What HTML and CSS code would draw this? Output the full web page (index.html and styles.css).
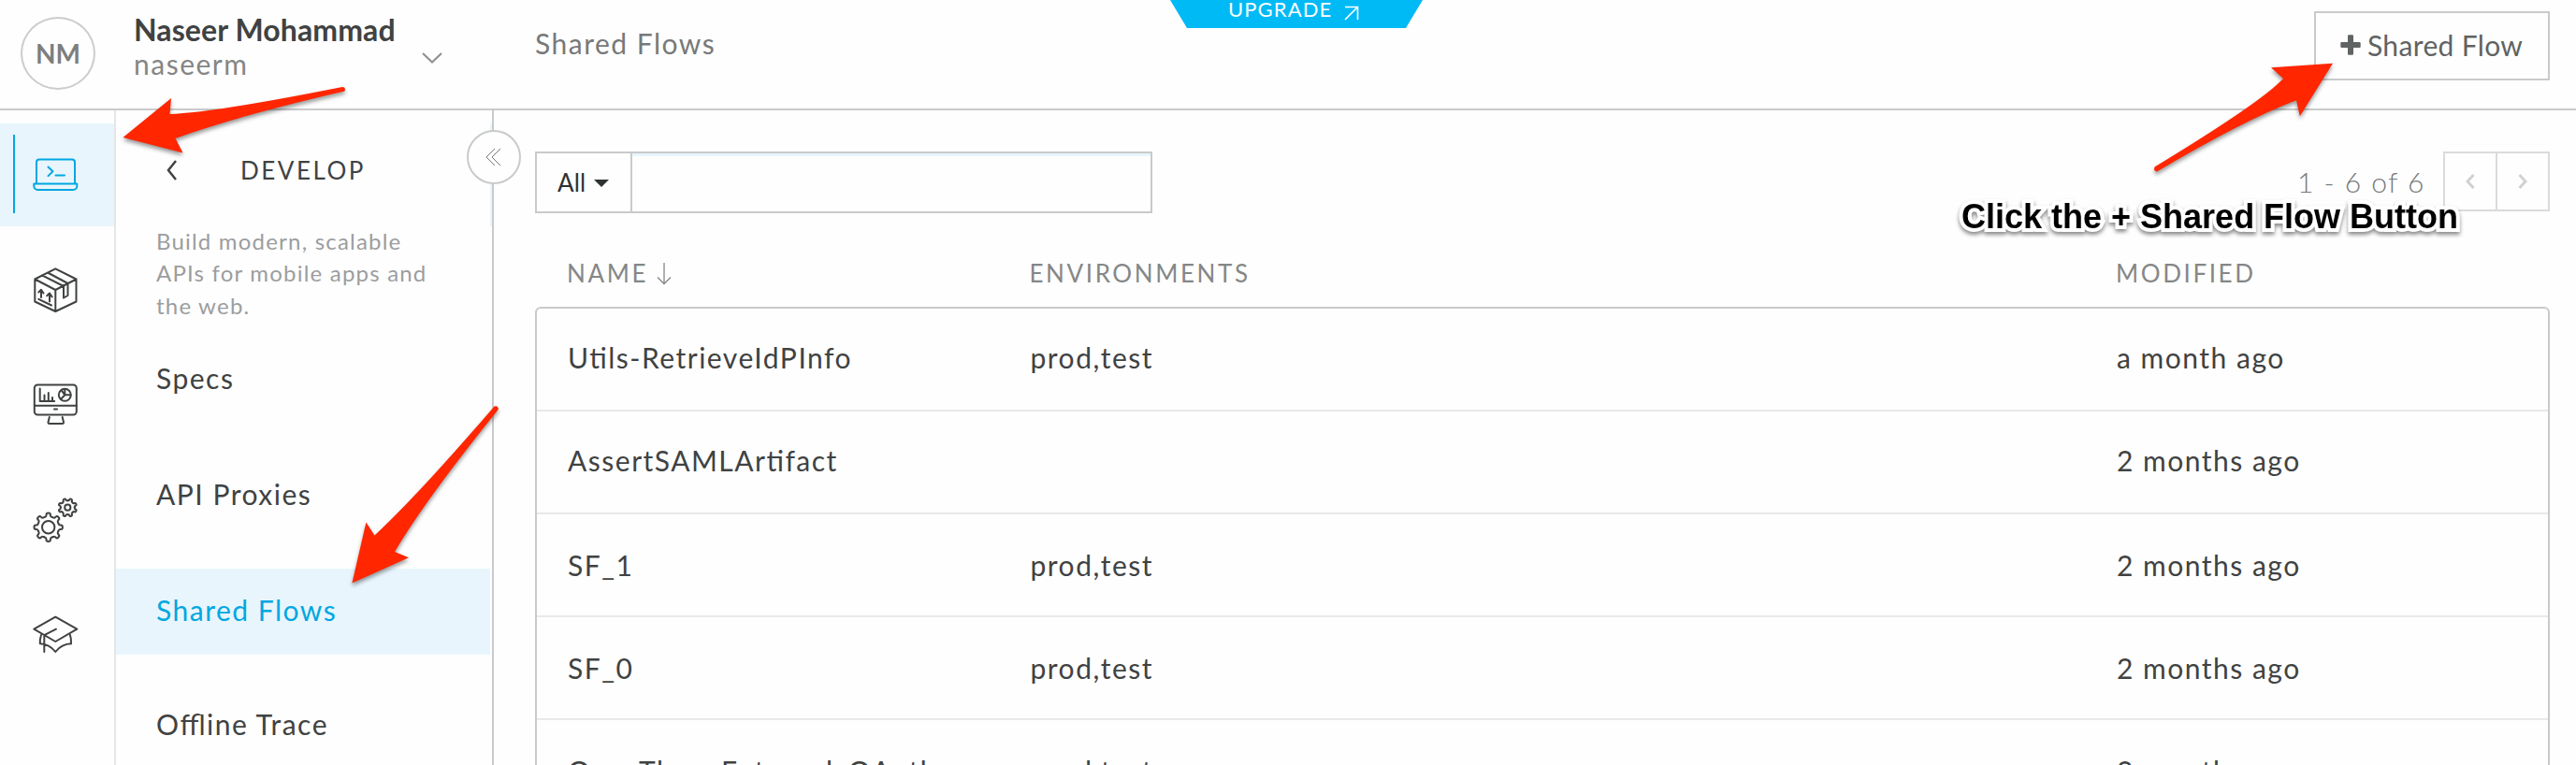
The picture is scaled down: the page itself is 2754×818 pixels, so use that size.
FILE: index.html
```
<!DOCTYPE html>
<html lang="en">
<head>
<meta charset="utf-8">
<title>Shared Flows</title>
<link rel="stylesheet" href="styles.css">
</head>
<body>
<div class="app">
  <header class="topbar">
    <div class="account">
      <div class="avatar">NM</div>
      <div class="who">
        <div class="who-name">Naseer Mohammad</div>
        <div class="who-id">naseerm</div>
      </div>
      <svg class="account-caret" width="24" height="14" viewBox="0 0 24 14"><path d="M2 2l10 9.500L22 2"/></svg>
    </div>
    <h1 class="title">Shared Flows</h1>
    <button class="new-flow">
      <svg width="22" height="22" viewBox="0 0 22 22"><path d="M8 1.500q0-1.200 1.200-1.200h3.600q1.200 0 1.200 1.200v6.500h6.500q1.200 0 1.200 1.200v3.600q0 1.200-1.200 1.200h-6.500v6.500q0 1.200-1.200 1.200H9.200q-1.200 0-1.200-1.200v-6.500h-6.500q-1.200 0-1.200-1.200V9.200q0-1.200 1.200-1.200h6.500z"/></svg>
      <span>Shared Flow</span>
    </button>
  </header>

  <div class="body">
    <nav class="rail">
      <a class="rail-item active">
        <svg class="icon" viewBox="0 0 50 50"><path d="M5 34V11.500a3 3 0 0 1 3-3h35a3 3 0 0 1 3 3V34M2.300 34.500h46v2.500a4 4 0 0 1-4 4h-38a4 4 0 0 1-4-4zM17.500 16.500l5 4.800-5 4.800M25.500 25.500h9.500"/></svg>
      </a>
      <a class="rail-item">
        <svg class="icon" viewBox="0 0 50 50"><path d="M25.300 2.300L47.500 13.500V37.500L25.300 48 3.300 37.500V13.500zM3.300 13.500L25.300 25 47.500 13.500M25.300 25V48M17 6.500L38.500 18V31L34 33.500V21L11 9.300M10 25v8M7.300 27.500L10 24.700l2.500 3.800M19 29v8.500M16.200 31.200L19 28.500l2.700 4M7.300 34.800L21 41.500"/></svg>
      </a>
      <a class="rail-item">
        <svg class="icon" viewBox="0 0 50 50"><rect x="2.800" y="3.500" width="45" height="32" rx="3.500"/><path d="M2.800 25.700h45M24 29.500h3M18.800 38l-1.300 5.500q0 1.500 1.500 1.500h13.500q1.500 0 1.500-1.500L32.700 38M8.700 7.500V21h15.500M13.500 21v-6.500M17.800 21v-9M22 21v-4"/><circle cx="35.300" cy="14.300" r="6.500"/><path d="M41.500 14.300h-6l-4.500 4.500M35.300 14.300l-3.600-5M35.300 14.300V8"/></svg>
      </a>
      <a class="rail-item">
        <svg class="icon" viewBox="0 0 50 50">
          <defs>
            <path id="tooth" vector-effect="non-scaling-stroke" d="M-4.400-10.600C-3-11-2.200-11.300-2.200-12.500V-13.500Q-2.200-15.200 0-15.200T2.200-13.500V-12.500C2.200-11.300 3-11 4.400-10.600"/>
            <g id="gear">
              <use href="#tooth"/><use href="#tooth" transform="rotate(45)"/><use href="#tooth" transform="rotate(90)"/><use href="#tooth" transform="rotate(135)"/>
              <use href="#tooth" transform="rotate(180)"/><use href="#tooth" transform="rotate(225)"/><use href="#tooth" transform="rotate(270)"/><use href="#tooth" transform="rotate(315)"/>
            </g>
          </defs>
          <use href="#gear" transform="translate(17.700 32.700)"/><circle cx="17.700" cy="32.700" r="6.700"/>
          <use href="#gear" transform="translate(38.300 11.700) rotate(22.500) scale(.65)"/><circle cx="38.300" cy="11.700" r="3.100"/>
        </svg>
      </a>
      <a class="rail-item">
        <svg class="icon" viewBox="0 0 50 50"><path d="M25.300 5.700L48.300 18.700 25.300 32 2.300 18.700zM26 18.700L13.300 25.200V43M10 25q-1.500 4.500-1.200 9.300Q18.500 34.500 25.300 43 32 34.500 42 34.300 42.500 29.500 40.800 24.500"/></svg>
      </a>
    </nav>

    <aside class="panel">
      <div class="panel-head">
        <svg width="14" height="24" viewBox="0 0 14 24"><path d="M11 2L3 12l8 10"/></svg>
        <span>DEVELOP</span>
      </div>
      <p class="panel-text">Build modern, scalable<br>APIs for mobile apps and<br>the web.</p>
      <ul class="menu">
        <li>Specs</li>
        <li>API Proxies</li>
        <li class="selected">Shared Flows</li>
        <li>Offline Trace</li>
      </ul>
      <button class="collapse">
        <svg width="18" height="20" viewBox="0 0 18 20"><path d="M11 1L2 10l9 9M17 1l-9 9 9 9"/></svg>
      </button>
    </aside>

    <main class="content">
      <div class="toolbar">
        <div class="filter">
          <div class="filter-scope">All<i class="caret"></i></div>
          <div class="filter-input"></div>
        </div>
        <div class="pager">
          <span class="pager-count">1 - 6 of 6</span>
          <div class="pager-buttons">
            <span><svg width="10" height="16" viewBox="0 0 10 16"><path d="M8.500 1L2 8l6.500 7"/></svg></span>
            <span><svg width="10" height="16" viewBox="0 0 10 16"><path d="M1.500 1L8 8l-6.500 7"/></svg></span>
          </div>
        </div>
      </div>
      <div class="cols head">
        <span>NAME<svg width="16" height="25" viewBox="0 0 16 25"><path d="M8 1v22M1 16.500l7 7 7-7"/></svg></span>
        <span>ENVIRONMENTS</span>
        <span>MODIFIED</span>
      </div>
      <div class="table">
        <div class="cols row"><span>Utils-RetrieveIdPInfo</span><span>prod,test</span><span>a month ago</span></div>
        <div class="cols row"><span>AssertSAMLArtifact</span><span></span><span>2 months ago</span></div>
        <div class="cols row low"><span>SF_1</span><span>prod,test</span><span>2 months ago</span></div>
        <div class="cols row low"><span>SF_0</span><span>prod,test</span><span>2 months ago</span></div>
        <div class="cols row low"><span>One_Then_External_OAuth</span><span>prod,test</span><span>2 months ago</span></div>
      </div>
    </main>
  </div>

  <a class="upgrade">UPGRADE<svg width="16" height="16" viewBox="0 0 16 16"><path d="M1 1.500h13.500V15M14.500 1.500L1 15"/></svg></a>

  <svg class="arrows" viewBox="0 0 2754 818">
    <path d="M131.500 147L183 105 181.500 122Q225 121 366 93Q370 93.500 368.500 97.500Q250 125 187.500 148L195.500 163.500z"/>
    <path d="M376.400 623.500L391.400 558.500 400.500 572.500Q450 526 528.500 434.500Q532 433 533 437.500Q455 534 422 590L437 596.300z"/>
    <path d="M2494 67.700L2428 72.300 2441 84Q2418 109 2303.500 178.500Q2302 183 2306 183.500Q2400 128 2455 107.300L2458.800 124.300z"/>
  </svg>
  <div class="callout">Click the + Shared Flow Button</div>
</div>
</body>
</html>
```
FILE: styles.css
```
* { box-sizing: border-box; }

body {
  margin: 0;
  background: #fefefe;
  color: #404242;
  font: 30px/36px Lato, sans-serif;
  letter-spacing: 1.5px;
  font-feature-settings: "liga" 1;
}

button {
  padding: 0;
  background: #fefefe;
  font: inherit;
}

svg {
  flex: none;
  fill: none;
  stroke: currentColor;
}

.app {
  position: relative;
  width: 2754px;
  height: 818px;
  overflow: hidden;
  display: flex;
  flex-direction: column;
}

/* Top bar */
.topbar {
  flex: none;
  height: 118px;
  display: flex;
  align-items: flex-start;
  padding-right: 28px;
  border-bottom: 2px solid #c9cacb;
}

.account {
  width: 572px;
  height: 116px;
  display: flex;
  align-items: flex-start;
}

.avatar {
  width: 80px;
  height: 78px;
  margin: 18px 41px 0 22px;
  border: 2px solid #cbcccd;
  border-radius: 50%;
  color: #7d7e7e;
  font-size: 28px;
  font-weight: 700;
  line-height: 74px;
  letter-spacing: 0;
  text-align: center;
}

.who { width: 307px; padding-top: 14px; }
.who-name { font-size: 32px; font-weight: 700; letter-spacing: .1px; white-space: nowrap; }
.who-id { color: #848686; }
.account-caret { margin-top: 55px; color: #8f9191; stroke-width: 2.2; }

.title {
  flex: 1;
  margin: 28px 0 0;
  color: #777979;
  font-size: 30px;
  font-weight: 400;
}

.new-flow {
  width: 252px;
  height: 74px;
  margin-top: 12px;
  display: flex;
  align-items: center;
  gap: 7px;
  padding: 0 0 2px 26px;
  border: 2px solid #c9cacb;
  color: #606363;
  letter-spacing: .35px;
}

.new-flow svg { fill: currentColor; stroke: none; }

/* Icon rail */
.body { flex: 1; min-height: 0; display: flex; }

.rail {
  width: 124px;
  padding-top: 14px;
  display: flex;
  flex-direction: column;
  gap: 13px;
  border-right: 2px solid #e5e6e6;
}

.rail-item {
  flex: none;
  height: 110px;
  display: flex;
  align-items: center;
  padding-left: 34px;
}

.rail-item.active {
  color: #00a7e1;
  background: linear-gradient(#00a7e1, #00a7e1) 14px 12px / 2px 84px no-repeat #e8f5fc;
}

.icon {
  width: 50px;
  height: 50px;
  stroke-width: 2;
  stroke-linecap: round;
  stroke-linejoin: round;
}

/* Section panel */
.panel {
  position: relative;
  width: 404px;
  padding: 48px 2px 0 0;
  border-right: 2px solid #c9cacb;
  background: linear-gradient(#e8f5fc, #e8f5fc) right 14px / 2px 110px no-repeat;
}

.panel-head {
  height: 75px;
  display: flex;
  align-items: flex-start;
  gap: 66px;
  padding-left: 53px;
  font-size: 26px;
  line-height: 32px;
  letter-spacing: 2.5px;
}

.panel-head svg { margin-top: 4px; stroke-width: 2.5; }

.panel-text {
  height: 103px;
  margin: 0 0 16px;
  padding-left: 43px;
  color: #9b9d9e;
  font-size: 24px;
  line-height: 34.3px;
  letter-spacing: 1.2px;
}

.menu {
  margin: 0;
  padding: 0;
  list-style: none;
  display: flex;
  flex-direction: column;
  gap: 32px;
}

.menu li {
  height: 92px;
  padding-left: 43px;
  line-height: 88px;
}

.menu .selected { background: #e8f5fc; color: #00a7e1; }
.menu li:last-child { margin-top: -2px; }

.collapse {
  position: absolute;
  top: 21px;
  right: -31px;
  width: 58px;
  height: 58px;
  display: grid;
  place-items: center;
  padding-right: 2px;
  border: 2px solid #c9cacb;
  border-radius: 50%;
  color: #777979;
}

/* Main list */
.content { flex: 1; padding: 44px 28px 0 44px; }

.toolbar { height: 114px; display: flex; justify-content: space-between; }

.filter {
  width: 660px;
  height: 66px;
  display: flex;
  border: 2px solid #c9cacb;
}

.filter-scope {
  width: 100px;
  display: flex;
  align-items: center;
  gap: 9px;
  padding-left: 22px;
  color: #2f3232;
  font-size: 26px;
  letter-spacing: .1px;
}

.caret {
  border: solid transparent;
  border-width: 8px 8px 0;
  border-top-color: #2f3232;
  margin-top: 2px;
}

.filter-input {
  flex: 1;
  border-left: 2px solid #c9cacb;
  box-shadow: inset 0 3px #e8f5fc;
}

.pager { display: flex; }

.pager-count {
  margin: 14px 19px 0 0;
  color: #777979;
  font-weight: 300;
  letter-spacing: 1.5px;
}

.pager-buttons {
  width: 114px;
  height: 64px;
  display: flex;
  border: 2px solid #dadbdb;
  color: #d0d1d1;
}

.pager-buttons span { flex: 1; display: grid; place-items: center; }
.pager-buttons span + span { border-left: 2px solid #dadbdb; }
.pager-buttons svg { stroke-width: 3; }

.cols { display: grid; grid-template-columns: 494.500px 1161.500px 1fr; }

.head {
  height: 52px;
  padding-left: 34px;
  color: #858787;
  font-size: 26px;
  line-height: 32px;
  letter-spacing: 2.6px;
}

.head span { height: 32px; display: flex; align-items: center; gap: 9px; }
.head svg { stroke-width: 1.3; }

.table {
  height: 600px;
  border: 2px solid #c9cacb;
  border-radius: 6px;
}

.row {
  height: 110px;
  padding-left: 33px;
  border-bottom: 2px solid #e8e9e9;
  line-height: 104px;
}

.row.low { line-height: 108px; }

/* Overlays */
.upgrade {
  position: absolute;
  top: 0;
  left: 1251px;
  width: 270px;
  height: 30px;
  display: flex;
  gap: 13px;
  padding-left: 62px;
  background: #00baf6;
  clip-path: polygon(0 0, 100% 0, 252px 100%, 18px 100%);
  color: #fff;
  font-size: 22px;
  line-height: 19px;
  letter-spacing: 1.1px;
}

.upgrade svg { margin-top: 6px; stroke-width: 1.6; }

.arrows {
  position: absolute;
  inset: 0;
  fill: #ff2600;
  stroke: none;
  filter: drop-shadow(0 3px 2px rgba(0, 0, 0, .4));
  pointer-events: none;
}

.callout {
  position: absolute;
  top: 211px;
  left: 2097px;
  color: #000;
  font: 700 36px/41px "Liberation Sans", Arial, sans-serif;
  letter-spacing: 0;
  white-space: nowrap;
  -webkit-text-stroke: 8px #fff;
  paint-order: stroke fill;
  filter: drop-shadow(0 3px 2px rgba(0, 0, 0, .45));
}
```
